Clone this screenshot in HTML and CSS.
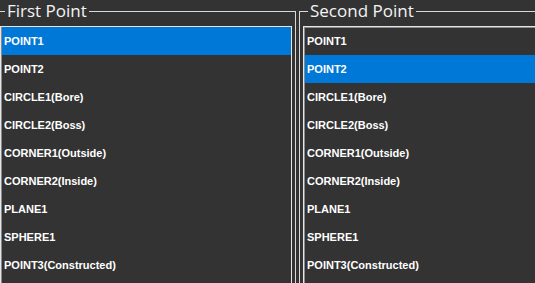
FILE: index.html
```html
<!DOCTYPE html>
<html>
<head>
	<meta charset="UTF-8">
	<title>Point Selection</title>
	<link rel="stylesheet" href="styles.css">
</head>
<body>
	<div class="groups">
		<fieldset class="group first">
			<legend>First Point</legend>
			<ul class="listbox">
				<li class="selected">POINT1</li>
				<li>POINT2</li>
				<li>CIRCLE1(Bore)</li>
				<li>CIRCLE2(Boss)</li>
				<li>CORNER1(Outside)</li>
				<li>CORNER2(Inside)</li>
				<li>PLANE1</li>
				<li>SPHERE1</li>
				<li>POINT3(Constructed)</li>
			</ul>
		</fieldset>
		<fieldset class="group second">
			<legend>Second Point</legend>
			<ul class="listbox">
				<li>POINT1</li>
				<li class="selected">POINT2</li>
				<li>CIRCLE1(Bore)</li>
				<li>CIRCLE2(Boss)</li>
				<li>CORNER1(Outside)</li>
				<li>CORNER2(Inside)</li>
				<li>PLANE1</li>
				<li>SPHERE1</li>
				<li>POINT3(Constructed)</li>
			</ul>
		</fieldset>
	</div>
</body>
</html>
```

FILE: styles.css
```css
html, body {
	margin: 0;
	background-color: #333333;
	overflow: hidden;
}
.groups {
	display: flex;
	gap: 3px;
	margin-left: -4px;
	width: 560px;
}
.group {
	margin: 0;
	padding: 1px 3px 0 3px;
	border: 1px solid #d8d8d8;
	min-width: 0;
	height: 320px;
}
.group.first {
	width: 292px;
	flex: none;
}
.group.second {
	flex: 1;
}
.group legend {
	margin-left: 5px;
	padding: 0 2px;
	font-family: "Open Sans", sans-serif;
	font-size: 17px;
	line-height: 22px;
	color: #f4f4f4;
}
.listbox {
	list-style: none;
	margin: 3px 0 0 0;
	padding: 0;
	border: 1px solid #e6e6e6;
	box-shadow: inset 1px 1px 0 #8a8a8a;
	height: 300px;
}
.listbox li {
	height: 28px;
	line-height: 28px;
	padding-left: 2px;
	margin-left: 1px;
	font-family: "Liberation Sans", Arial, sans-serif;
	font-weight: bold;
	font-size: 11px;
	color: #ffffff;
}
.listbox li.selected {
	background-color: #0078d7;
}
```
